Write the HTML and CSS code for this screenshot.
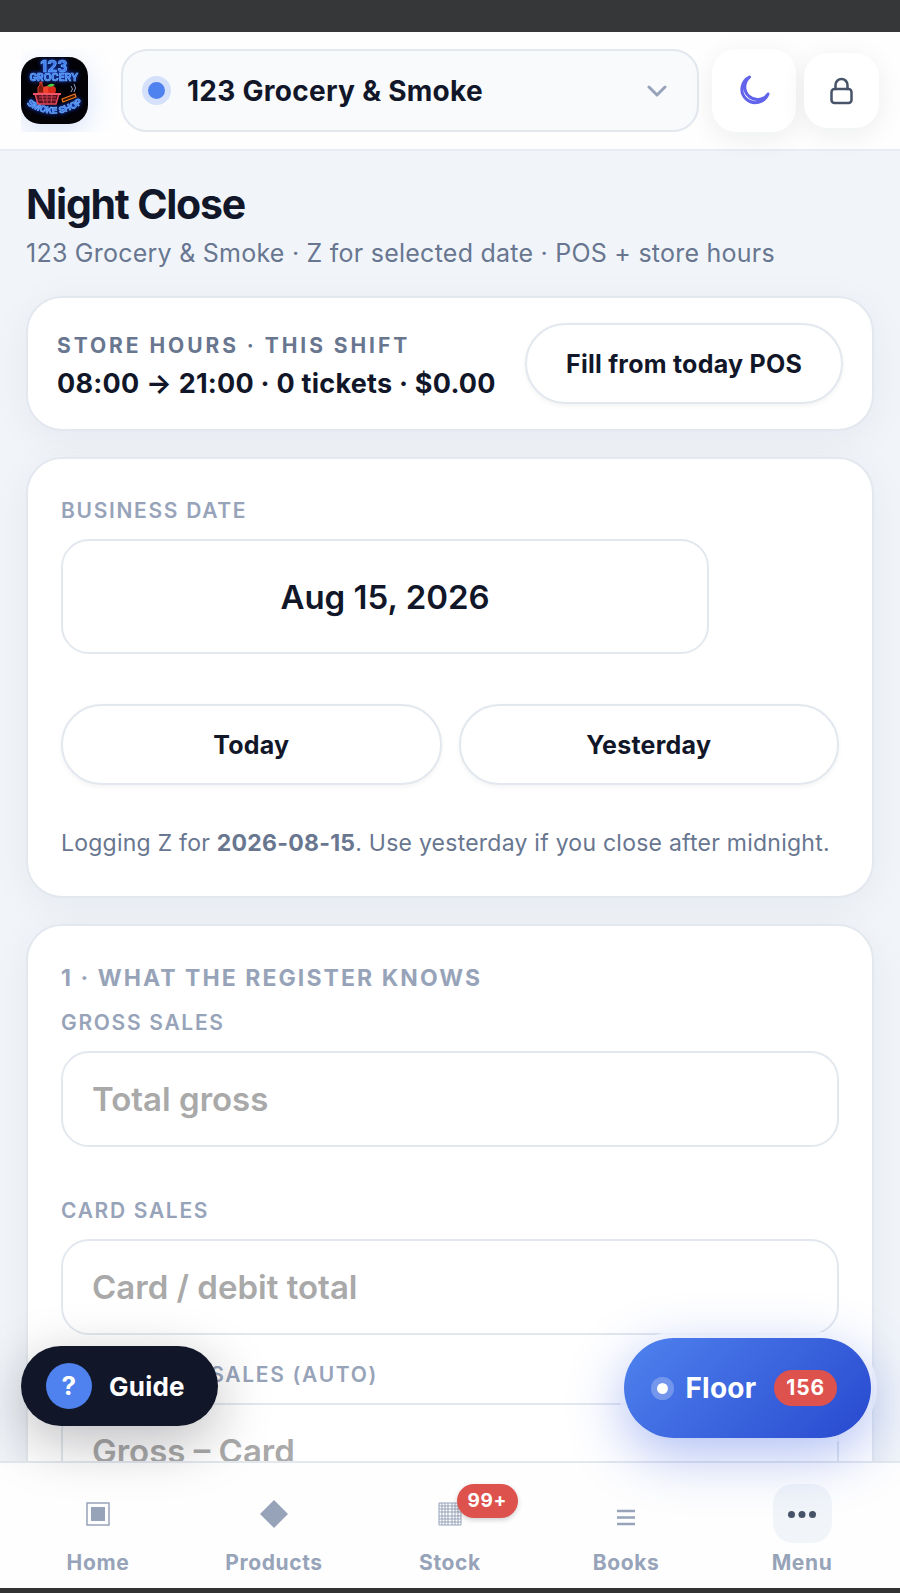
FILE: index.html
```html
<!DOCTYPE html>
<html lang="en">
<head>
  <meta charset="UTF-8">
  <meta name="viewport" content="width=device-width, initial-scale=1">
  <title>Night Close</title>
  <link rel="stylesheet" href="styles.css">
</head>
<body>
  <div class="app">
    <header class="topbar">
      <div class="brand">
        <svg class="logo" viewBox="0 0 67 67" role="img" aria-label="123 Grocery Smoke Shop">
          <defs>
            <path id="arc" d="M4 46 Q33 68 63 45"/>
          </defs>
          <rect width="67" height="67" fill="#020207"/>
          <g class="neon">
            <text text-anchor="middle"><tspan x="33" y="15" font-size="16">123</tspan><tspan x="33" y="24" font-size="10">GROCERY</tspan></text>
            <text font-size="9"><textPath href="#arc" startOffset="50%" text-anchor="middle">SMOKE SHOP</textPath></text>
          </g>
          <path d="M17 36v-6l2-2v-3h2v3l2 3v5z" fill="#7a1c10" stroke="#e2402c"/>
          <circle cx="26" cy="33" r="4" fill="#f0432c"/>
          <circle cx="31" cy="33" r="4" fill="#d9291c"/>
          <path d="M26 29q4-4 8-1q-4 3-8 1z" fill="#47d14a"/>
          <path d="M14 37h24l-3 10H17z" fill="#5b1220" stroke="#e2495c" stroke-width="1.5"/>
          <path d="M18 40h17M18 43h17M21 38l2 9M26 38v9M31 38l-1 9" stroke="#c93d4f"/>
          <path d="M12 37h28" stroke="#f2566b" stroke-width="2"/>
          <path d="M41 42l13-5 1 3-13 5z" fill="#3a1500" stroke="#f07a22" stroke-width="1.2"/>
          <path d="M50 35q3-3 0-6M53 35q3-4 0-8" stroke="#8ea2c8" fill="none"/>
        </svg>
      </div>

      <div class="store">
        <span class="store-dot"></span>
        <select class="store-select" aria-label="Store">
          <option selected>123 Grocery &amp; Smoke</option>
        </select>
        <svg class="store-chevron" viewBox="0 0 20 12" aria-hidden="true"><path d="M2 2l8 8 8-8"/></svg>
      </div>

      <div class="actions">
        <button class="icon-btn theme" type="button" aria-label="Toggle theme">
          <svg viewBox="0 0 32 32" width="32" height="32"><path d="M11.500 2A13.500 13.500 0 1 0 30 19A12.700 12.700 0 1 1 11.500 2z"/></svg>
        </button>
        <button class="icon-btn lock" type="button" aria-label="Lock">
          <svg viewBox="0 0 24 28" width="24" height="28"><rect x="1.500" y="12" width="20" height="14" rx="3"/><path d="M5.500 12V8a6 6 0 0 1 12 0v4"/></svg>
        </button>
      </div>
    </header>

    <main class="page">
      <div class="page-head">
        <h1>Night Close</h1>
        <p>123 Grocery &amp; Smoke · Z for selected date · POS + store hours</p>
      </div>

      <section class="card shift">
        <div class="shift-info">
          <div class="shift-label">Store hours · this shift</div>
          <div class="shift-value">08:00 → 21:00 · 0 tickets · $0.00</div>
        </div>
        <button class="pill" type="button">Fill from today POS</button>
      </section>

      <section class="card">
        <div class="field">
          <label for="biz-date">Business date</label>
          <input class="date" id="biz-date" type="text" value="Aug 15, 2026" readonly>
        </div>
        <div class="date-buttons">
          <button class="pill" type="button">Today</button>
          <button class="pill" type="button">Yesterday</button>
        </div>
        <p class="note">Logging Z for <strong>2026-08-15</strong>. Use yesterday if you close after midnight.</p>
      </section>

      <section class="card register">
        <h2>1 · What the register knows</h2>
        <div class="field spaced">
          <label for="gross">Gross sales</label>
          <input id="gross" type="text" inputmode="decimal" placeholder="Total gross">
        </div>
        <div class="field">
          <label for="card">Card sales</label>
          <input id="card" type="text" inputmode="decimal" placeholder="Card / debit total">
        </div>
        <div class="field auto">
          <label for="cash">Daily cash sales (auto)</label>
          <input id="cash" type="text" placeholder="Gross – Card" readonly>
        </div>
      </section>
    </main>

    <nav class="tabbar">
      <a class="tab" href="#">
        <span class="tab-icon"><svg viewBox="0 0 24 24" width="24" height="24"><rect x="1" y="1" width="22" height="22" fill="none" stroke="currentColor" stroke-width="1.500"/><rect x="5" y="5" width="14" height="14" fill="currentColor"/></svg></span>
        Home
      </a>
      <a class="tab" href="#">
        <span class="tab-icon"><svg viewBox="0 0 28 28" width="28" height="28"><path d="M14 0l14 14-14 14L0 14z" fill="currentColor"/></svg></span>
        Products
      </a>
      <a class="tab" href="#">
        <span class="tab-icon">
          <svg viewBox="0 0 24 24" width="24" height="24"><path d="M1 1h22v22H1zM4 1v22M7 1v22M10 1v22M14 1v22M17 1v22M20 1v22M1 4h22M1 7h22M1 10h22M1 14h22M1 17h22M1 20h22" fill="none" stroke="currentColor"/></svg>
          <span class="tab-badge">99+</span>
        </span>
        Stock
      </a>
      <a class="tab" href="#">
        <span class="tab-icon"><svg viewBox="0 0 18 24" width="18" height="24"><path d="M0 9h18M0 15.500h18M0 22h18" stroke="currentColor" stroke-width="2.500"/></svg></span>
        Books
      </a>
      <a class="tab" href="#">
        <span class="tab-icon active"><svg viewBox="0 0 28 8" width="28" height="8" fill="currentColor"><circle cx="3.500" cy="4.500" r="3.500"/><circle cx="14" cy="4.500" r="3.500"/><circle cx="24.500" cy="4.500" r="3.500"/></svg></span>
        Menu
      </a>
    </nav>

    <button class="fab guide" type="button"><span class="guide-mark">?</span>Guide</button>
    <button class="fab floor" type="button"><span class="floor-dot"></span>Floor<span class="floor-count">156</span></button>
  </div>
</body>
</html>
```
FILE: styles.css
```css
:root {
  --ink: #111729;
  --muted: #68768f;
  --soft: #97a3b9;
  --line: #e3e8ef;
  --blue: #4f82ee;
  --red: #de524d;
}

* {
  box-sizing: border-box;
}

body {
  margin: 0;
  font-family: Inter, "Liberation Sans", sans-serif;
  letter-spacing: 0.015em;
  color: var(--ink);
  background: #f1f5fa;
}

button, input, select {
  font-family: inherit;
  color: inherit;
}

button {
  letter-spacing: inherit;
}

h1, h2, p {
  margin: 0;
}

/* shell */
.app {
  position: relative;
  display: flex;
  flex-direction: column;
  height: 100vh;
  overflow: hidden;
  border-top: 32px solid #363738;
  border-bottom: 5px solid #333233;
}

.topbar {
  display: flex;
  align-items: center;
  flex: none;
  padding: 17px 21px;
  border-bottom: 2px solid #e9edf3;
  background: #fefefe;
}

.brand {
  display: flex;
  align-items: center;
  width: 100px;
  height: 83px;
  overflow: hidden;
}

.logo {
  width: 67px;
  height: 67px;
  border-radius: 19px;
  box-shadow: 0 8px 28px rgba(79, 130, 238, 0.22);
}

.neon {
  font-weight: 700;
  letter-spacing: 0;
  fill: #3f7df0;
  stroke: #7cbcff;
  stroke-width: 0.5px;
  filter: drop-shadow(0 0 2px #1d4dff);
}

.store {
  display: flex;
  align-items: center;
  flex: 1;
  height: 83px;
  padding: 0 30px 0 19px;
  border: 2px solid var(--line);
  border-radius: 26px;
  background: #f8fafc;
}

.store-dot {
  flex: none;
  width: 29px;
  height: 29px;
  border: 6px solid #d5e1fa;
  border-radius: 50%;
  background: var(--blue);
}

.store-select {
  flex: 1;
  height: 60px;
  padding: 0 16px;
  border: 0;
  appearance: none;
  background: none;
  font-size: 28px;
  font-weight: 700;
  letter-spacing: 0.01em;
}

.store-chevron {
  width: 20px;
  height: 12px;
  fill: none;
  stroke: var(--soft);
  stroke-width: 3;
  stroke-linecap: round;
  stroke-linejoin: round;
}

.actions {
  display: flex;
  align-items: center;
  gap: 8px;
  margin-left: 13px;
}

.icon-btn {
  display: flex;
  align-items: center;
  justify-content: center;
  width: 75px;
  height: 75px;
  padding: 0;
  border: 0;
  border-radius: 24px;
  background: #fff;
  box-shadow: 0 6px 28px rgba(15, 23, 42, 0.07);
}

.icon-btn svg {
  fill: none;
  stroke: #475368;
  stroke-width: 2.5;
  stroke-linecap: round;
  stroke-linejoin: round;
}

.icon-btn.theme {
  width: 84px;
  height: 83px;
}

.icon-btn.theme svg {
  stroke: #6163ea;
  stroke-width: 3;
}

/* page */
.page {
  flex: 1;
  min-height: 0;
  overflow: hidden;
  padding: 28px 26px 0;
}

.page-head {
  margin-bottom: 27px;
}

.page-head h1 {
  font-size: 41px;
  line-height: 50px;
  font-weight: 700;
  letter-spacing: -0.03em;
}

.page-head p {
  padding-top: 8px;
  font-size: 25px;
  line-height: 32px;
  color: var(--muted);
}

.card {
  margin-bottom: 26px;
  padding: 36px 33px;
  border: 2px solid var(--line);
  border-radius: 36px;
  background: #fff;
  box-shadow: 0 8px 40px rgba(20, 28, 36, 0.05);
}

.shift {
  display: flex;
  align-items: center;
  justify-content: space-between;
  padding: 25px 29px;
}

.shift-info {
  padding-top: 4px;
}

.shift-label {
  font-size: 21px;
  line-height: 32px;
  font-weight: 700;
  letter-spacing: 0.14em;
  text-transform: uppercase;
  color: var(--muted);
}

.shift-value {
  padding-top: 4px;
  font-size: 27px;
  line-height: 36px;
  font-weight: 700;
  white-space: nowrap;
}

.pill {
  height: 81px;
  padding: 0 39px;
  border: 2px solid var(--line);
  border-radius: 41px;
  background: #fff;
  box-shadow: 0 2px 5px rgba(15, 23, 42, 0.05);
  font-size: 25px;
  font-weight: 700;
  white-space: nowrap;
}

.field label {
  display: block;
  margin-bottom: 12px;
  font-size: 21px;
  line-height: 32px;
  font-weight: 600;
  letter-spacing: 0.08em;
  text-transform: uppercase;
  color: var(--soft);
}

.field input {
  display: block;
  width: 100%;
  height: 96px;
  padding: 0 29px;
  border: 2px solid var(--line);
  border-radius: 28px;
  background: #fff;
  font-size: 33px;
  font-weight: 600;
}

.field input::placeholder {
  color: #a9a9a9;
}

.field .date {
  width: 83.3%;
  height: 115px;
  text-align: center;
}

.date-buttons {
  display: grid;
  grid-template-columns: 1fr 1fr;
  gap: 17px;
  margin-top: 50px;
}

.note {
  margin-top: 41px;
  font-size: 23px;
  line-height: 34px;
  color: var(--muted);
}

.register h2 {
  margin-bottom: 13px;
  font-size: 23px;
  line-height: 32px;
  font-weight: 700;
  letter-spacing: 0.09em;
  text-transform: uppercase;
  color: var(--soft);
}

.spaced {
  margin-bottom: 48px;
}

.auto {
  margin-top: 24px;
}

/* bottom tabs */
.tabbar {
  display: grid;
  grid-template-columns: repeat(5, 1fr);
  flex: none;
  padding: 21px 10px 9px;
  border-top: 2px solid var(--line);
  background: #fefefe;
}

.tab {
  display: flex;
  flex-direction: column;
  align-items: center;
  gap: 4px;
  font-size: 21px;
  line-height: 32px;
  font-weight: 700;
  letter-spacing: 0.03em;
  text-decoration: none;
  color: var(--soft);
}

.tab-icon {
  position: relative;
  display: flex;
  align-items: center;
  justify-content: center;
  width: 59px;
  height: 59px;
  border-radius: 20px;
}

.tab-icon.active {
  color: #475368;
  background: #f1f5f9;
}

.tab-badge {
  position: absolute;
  top: 0;
  left: 36px;
  padding: 0 11px;
  border-radius: 17px;
  background: var(--red);
  box-shadow: 0 2px 5px rgba(15, 23, 42, 0.2);
  color: #fff;
  font-size: 19px;
  line-height: 34px;
  font-weight: 700;
}

/* floating buttons */
.fab {
  position: absolute;
  display: flex;
  align-items: center;
  border: 0;
  border-radius: 50px;
  color: #fff;
  font-weight: 700;
}

.guide {
  left: 21px;
  bottom: 162px;
  gap: 17px;
  height: 80px;
  padding: 0 33px 0 25px;
  background: var(--ink);
  box-shadow: 0 16px 56px rgba(15, 15, 25, 0.28);
  font-size: 26px;
}

.guide-mark {
  width: 46px;
  border-radius: 50%;
  background: var(--blue);
  line-height: 46px;
}

.floor {
  right: 29px;
  bottom: 150px;
  gap: 11px;
  height: 100px;
  padding: 0 34px 0 27px;
  background: linear-gradient(135deg, #4f82ee, #2849cf);
  box-shadow: 0 16px 56px rgba(50, 90, 225, 0.4), 0 0 0 6px rgba(255, 255, 255, 0.8);
  font-size: 28px;
}

.floor-dot {
  width: 23px;
  height: 23px;
  border: 6px solid rgba(255, 255, 255, 0.25);
  border-radius: 50%;
  background: #fff;
  background-clip: padding-box;
}

.floor-count {
  margin-left: 7px;
  padding: 0 12px;
  border-radius: 18px;
  background: var(--red);
  font-size: 21px;
  line-height: 36px;
  letter-spacing: 0.04em;
}
```
